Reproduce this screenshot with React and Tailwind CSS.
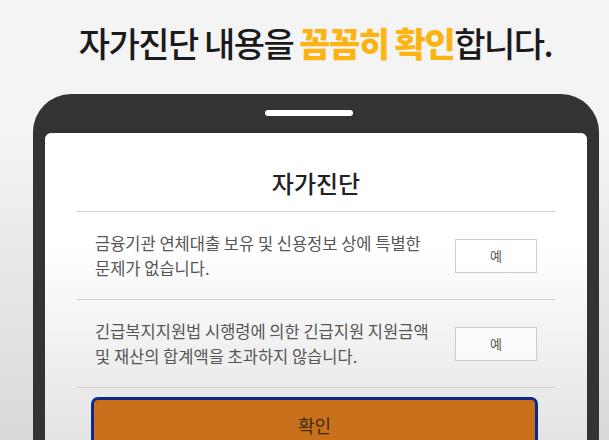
const font = { fontFamily: '"Noto Sans CJK KR", "Noto Sans", sans-serif' };

const rows = [
  ["금융기관 연체대출 보유 및 신용정보 상에 특별한", "문제가 없습니다."],
  ["긴급복지지원법 시행령에 의한 긴급지원 지원금액", "및 재산의 합계액을 초과하지 않습니다."],
];

export default function App() {
  return (
    <div
      className="w-[609px] h-[440px] overflow-hidden flex flex-col bg-linear-to-b from-[#f4f4f4] from-30% to-[#d9d9d9]"
      style={font}
    >
      {/* Heading */}
      <div className="h-[94px] shrink-0 flex items-center justify-center pl-[22px] pb-[8px]">
        <h1 className="text-[34px] leading-none font-medium tracking-[-0.045em] text-[#1a1a1a] whitespace-nowrap">
          자가진단 내용을{" "}
          <span className="font-black text-[#fcb415]">꼼꼼히 확인</span>합니다.
        </h1>
      </div>

      {/* Phone */}
      <div className="ml-[33px] w-[566px] flex-1 flex flex-col rounded-t-[38px] bg-[#333333] px-[12px] pt-[16px]">
        <div className="ml-[220px] w-[88px] h-[6px] rounded-full bg-white mb-[17px]" />

        <div className="flex-1 rounded-t-[6px] bg-linear-to-b from-white from-35% to-[#e2e2e2] px-[32px]">
          <div className="pt-[34px] pb-[12px] border-b border-[#cfcfcf]">
            <h2 className="text-[24px] leading-[32px] font-medium text-center text-[#222]">자가진단</h2>
          </div>

          {rows.map(([a, b]) => (
            <div key={a} className="h-[88px] flex items-center border-b border-[#cfcfcf]">
              <p className="pl-[18px] text-[16.5px] leading-[25px] text-[#555] whitespace-nowrap">
                {a}
                <br />
                {b}
              </p>
              <button className="ml-auto mr-[18px] w-[82px] h-[34px] border border-[#cccccc] bg-white/70 text-[13px] text-[#555]">
                예
              </button>
            </div>
          ))}

          <button className="mt-[9px] ml-[14px] w-[447px] h-[56px] rounded-[7px] border-[3px] border-[#0b2a90] bg-[#c8711a] text-[18px] text-[#3b2a12]">
            확인
          </button>
        </div>
      </div>
    </div>
  );
}
